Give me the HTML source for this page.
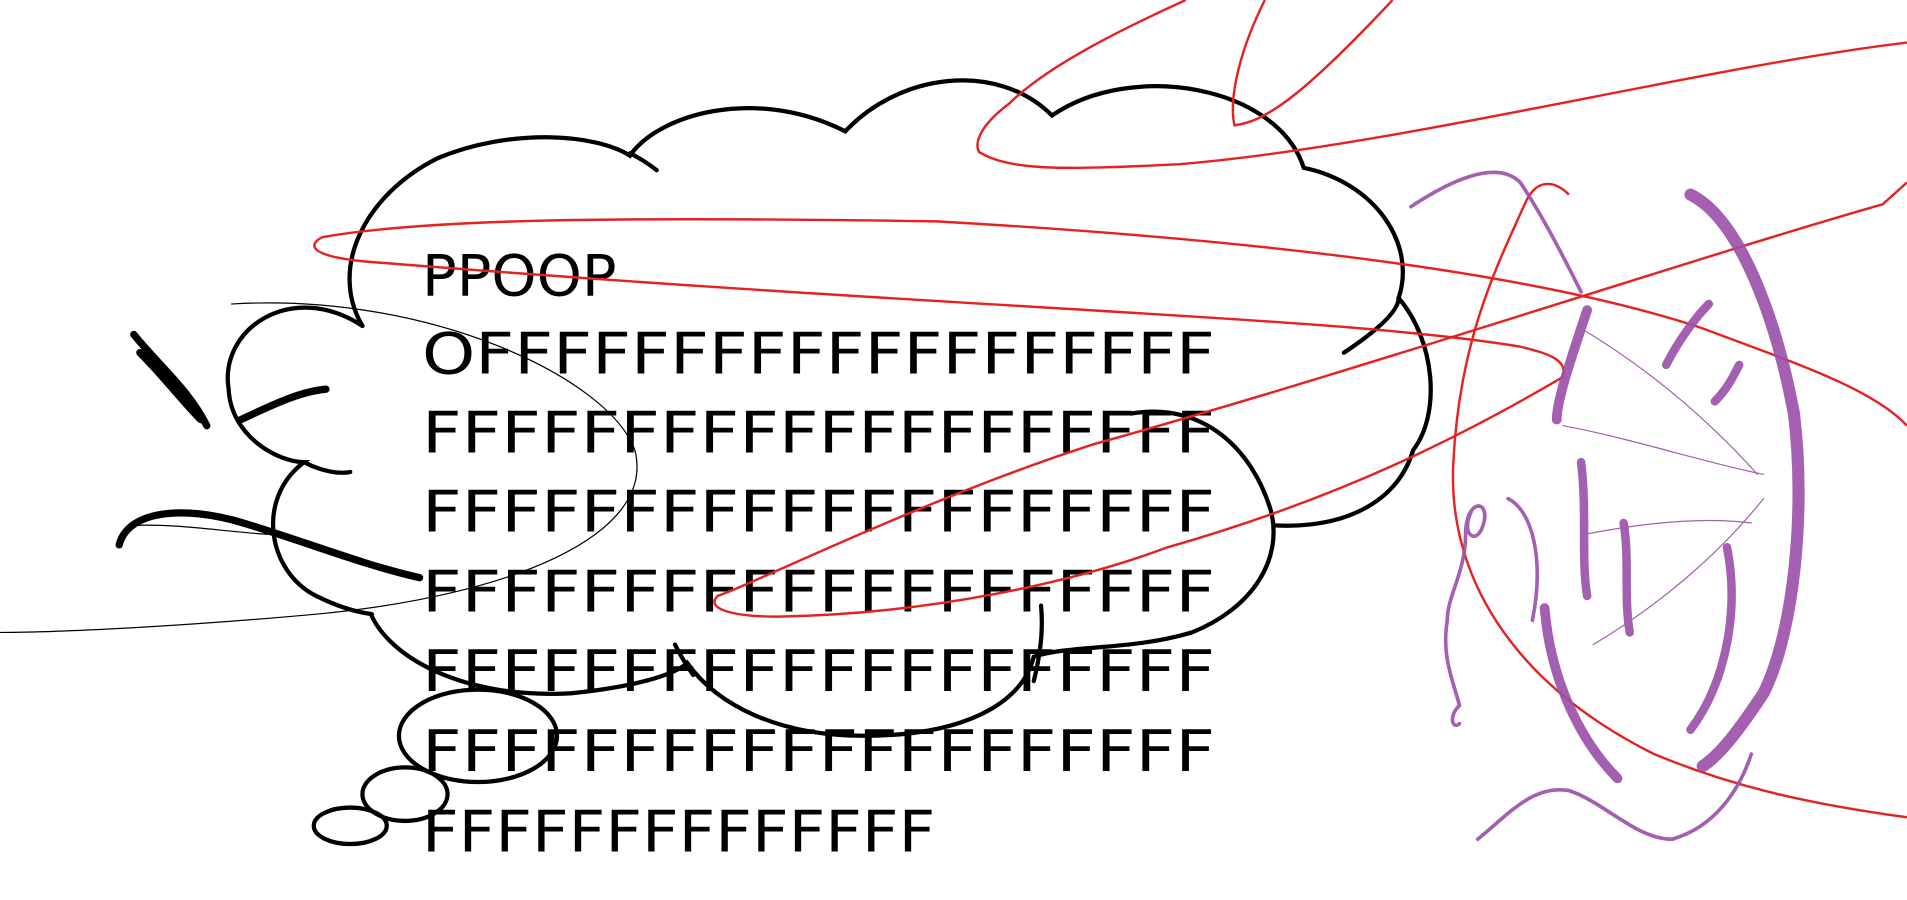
<!DOCTYPE html>
<html><head><style>html,body{margin:0;padding:0;background:#fff;overflow:hidden}svg{display:block}</style></head><body>
<svg width="1907" height="900" viewBox="0 0 1568 740" xmlns="http://www.w3.org/2000/svg">
<rect width="1568" height="740" fill="#fff"/>
<g fill="none" stroke="#000" stroke-width="3.5" stroke-linecap="round">
<path d="M298 268 C270 220 300 160 360 130 C420 105 490 110 518 128 C540 95 620 70 695 108 C740 60 820 50 865 95 C930 50 1050 70 1072 138 C1130 150 1165 200 1150 245 C1180 280 1185 340 1162 370 C1150 410 1110 435 1048 432"/>
<path d="M540 140 C530 132 522 128 518 126"/>
<path d="M1105 290 C1135 270 1150 255 1150 245"/>
<path d="M298 268 C240 230 180 270 188 320 C190 360 230 380 250 380 C210 410 220 470 260 490 C290 505 310 505 305 505 C320 540 380 575 470 570 C520 565 555 555 565 545 C590 580 640 605 710 605 C790 605 840 580 850 540 C880 530 930 535 980 520 C1030 500 1055 460 1045 420 C1030 370 990 330 930 340"/>
<path d="M250 380 C265 388 280 390 288 388"/>
<path d="M856 498 C858 520 855 540 850 560"/>
<path d="M555 530 C560 540 565 548 570 555"/>
<ellipse cx="393" cy="605" rx="65" ry="38"/>
<ellipse cx="333" cy="653" rx="35" ry="22"/>
<ellipse cx="288" cy="679" rx="30" ry="15"/>
</g>
<g fill="none" stroke="#000" stroke-width="6" stroke-linecap="round">
<path d="M110 275 C130 300 155 320 170 350"/>
<path d="M115 290 C135 310 150 330 165 345"/>
<path d="M198 345 C220 335 245 322 268 320"/>
<path d="M98 448 C105 420 150 415 200 430 C250 445 300 465 345 475"/>
</g>
<g fill="none" stroke="#000" stroke-width="1">
<path d="M190 250 C350 240 500 310 522 370 C540 440 420 490 260 505 C150 515 50 520 0 520"/>
<path d="M110 432 C150 430 200 440 240 440"/>
</g>
<g font-family="'DejaVu Sans','Liberation Sans',sans-serif" font-size="47" fill="#000">
<text x="347" y="243" textLength="160" lengthAdjust="spacingAndGlyphs">PPOOP</text>
<text x="347" y="307" textLength="652" lengthAdjust="spacingAndGlyphs">OFFFFFFFFFFFFFFFFFFF</text>
<text x="347" y="372" textLength="652" lengthAdjust="spacingAndGlyphs">FFFFFFFFFFFFFFFFFFFF</text>
<text x="347" y="437" textLength="652" lengthAdjust="spacingAndGlyphs">FFFFFFFFFFFFFFFFFFFF</text>
<text x="347" y="503" textLength="652" lengthAdjust="spacingAndGlyphs">FFFFFFFFFFFFFFFFFFFF</text>
<text x="347" y="568" textLength="652" lengthAdjust="spacingAndGlyphs">FFFFFFFFFFFFFFFFFFFF</text>
<text x="347" y="634" textLength="652" lengthAdjust="spacingAndGlyphs">FFFFFFFFFFFFFFFFFFFF</text>
<text x="347" y="700" textLength="422" lengthAdjust="spacingAndGlyphs">FFFFFFFFFFFFFF</text>
</g>
<g fill="none" stroke="#e52222" stroke-width="2">
<path d="M975 0 C920 25 860 55 830 85 C810 100 800 115 805 125 C830 140 870 140 970 135 C1150 120 1400 55 1568 35"/>
<path d="M1040 0 C1020 40 1010 80 1015 103 C1040 100 1070 80 1145 0"/>
<path d="M1568 150 L1548 168 C1400 210 1100 310 900 365 C760 410 620 480 590 490 C580 500 600 507 640 507 C760 505 880 480 960 450 C1100 410 1200 360 1285 310 C1290 295 1270 290 1250 285 C1100 260 800 255 300 215 C250 210 255 200 265 195 C350 180 500 178 770 182 C1000 195 1250 220 1400 270 C1480 300 1540 320 1568 350"/>
<path d="M1290 160 C1280 150 1265 145 1255 165 C1230 220 1200 280 1195 380 C1190 470 1240 560 1360 620 C1420 645 1480 660 1568 672"/>
</g>
<g fill="none" stroke="#9b4fa8" stroke-linecap="round" opacity="0.9">
<path stroke-width="3" d="M1160 170 C1190 150 1230 130 1250 150 C1270 180 1290 220 1300 240"/>
<path stroke-width="10" d="M1390 160 C1430 180 1460 260 1475 340 C1485 420 1475 520 1450 570 C1430 600 1415 620 1400 630"/>
<path stroke-width="8" d="M1305 255 C1290 300 1280 330 1280 345"/>
<path stroke-width="8" d="M1270 500 C1275 560 1300 610 1330 640"/>
<path stroke-width="7" d="M1300 380 C1305 420 1300 460 1305 490"/>
<path stroke-width="7" d="M1335 430 C1340 460 1335 490 1340 520"/>
<path stroke-width="7" d="M1370 300 C1380 280 1395 260 1405 250"/>
<path stroke-width="7" d="M1410 330 C1420 320 1425 310 1430 300"/>
<path stroke-width="7" d="M1420 450 C1430 500 1420 560 1390 600"/>
<path stroke-width="1" d="M1300 270 C1350 300 1400 340 1445 390"/>
<path stroke-width="1" d="M1285 350 C1340 360 1400 380 1450 390"/>
<path stroke-width="1" d="M1300 440 C1350 430 1400 425 1440 430"/>
<path stroke-width="1" d="M1310 530 C1360 500 1410 460 1450 410"/>
<path stroke-width="3" d="M1215 690 C1240 670 1260 645 1290 650 C1320 660 1345 690 1375 690 C1410 680 1430 650 1440 620"/>
<path stroke-width="3" d="M1210 420 C1200 440 1215 450 1220 430 C1225 410 1205 410 1205 440 C1205 470 1190 490 1190 510 C1185 540 1195 560 1200 580 C1190 590 1195 600 1200 595"/>
<path stroke-width="3" d="M1240 410 C1260 420 1270 460 1260 510"/>
</g>
</svg>
</body></html>
